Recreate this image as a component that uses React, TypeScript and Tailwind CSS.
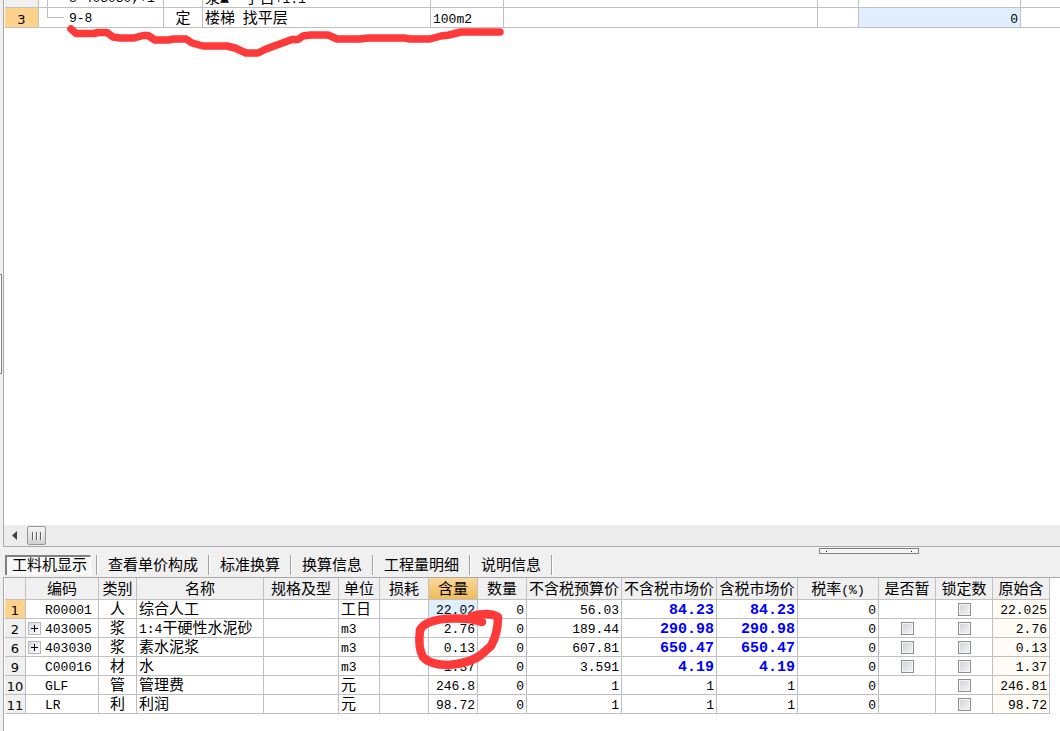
import React from "react";

const pageFont = "font-['Liberation_Mono','Noto_Sans_CJK_SC',monospace]";

function T({ children, bold = false }: { children: string; bold?: boolean }) {
  const parts = children.match(/[\x00-\x7f]+|[^\x00-\x7f]+/g) ?? [];
  return (
    <>
      {parts.map((p, i) => (
        <span
          key={i}
          className={
            /^[\x00-\x7f]/.test(p)
              ? bold
                ? "text-[15px] leading-3 font-bold whitespace-pre text-[#0000ff]"
                : "text-[13px] leading-3 whitespace-pre"
              : "text-[15px] leading-3"
          }
        >
          {p}
        </span>
      ))}
    </>
  );
}

type Row = {
  no: string;
  code: string;
  expand?: boolean;
  kind: string;
  name: string;
  unit: string;
  amount: string;
  prices: [string, string, string];
  temp?: boolean;
  origin: string;
};

const rows: Row[] = [
  { no: "1", code: "R00001", kind: "人", name: "综合人工", unit: "工日", amount: "22.02", prices: ["56.03", "84.23", "84.23"], origin: "22.025" },
  { no: "2", code: "403005", expand: true, kind: "浆", name: "1:4干硬性水泥砂", unit: "m3", amount: "2.76", prices: ["189.44", "290.98", "290.98"], temp: true, origin: "2.76" },
  { no: "6", code: "403030", expand: true, kind: "浆", name: "素水泥浆", unit: "m3", amount: "0.13", prices: ["607.81", "650.47", "650.47"], temp: true, origin: "0.13" },
  { no: "9", code: "C00016", kind: "材", name: "水", unit: "m3", amount: "1.37", prices: ["3.591", "4.19", "4.19"], temp: true, origin: "1.37" },
  { no: "10", code: "GLF", kind: "管", name: "管理费", unit: "元", amount: "246.8", prices: ["1", "1", "1"], origin: "246.81" },
  { no: "11", code: "LR", kind: "利", name: "利润", unit: "元", amount: "98.72", prices: ["1", "1", "1"], origin: "98.72" },
];

const headers = ["", "编码", "类别", "名称", "规格及型", "单位", "损耗", "含量", "数量", "不含税预算价", "不含税市场价", "含税市场价", "税率(%)", "是否暂", "锁定数", "原始含"];
const columns = ["w-[21px]", "w-[73px]", "w-[38px]", "w-[127px]", "w-[75px]", "w-[41px]", "w-[49px]", "w-[49px]", "w-[49px]", "w-[95px]", "w-[95px]", "w-[81px]", "w-[81px]", "w-[57px]", "w-[57px]", "w-[57px]", "w-auto"];
const topColumns = ["w-[34px]", "w-[125px]", "w-[39px]", "w-[228px]", "w-[73px]", "w-[314px]", "w-[41px]", "w-[162px]", "w-auto"];
const tabs = ["工料机显示", "查看单价构成", "标准换算", "换算信息", "工程量明细", "说明信息"];

const table = "w-full table-fixed border-separate border-spacing-0 text-[15px] leading-[15px]";
const line = "border-r border-b border-[#c0c0c0] whitespace-nowrap overflow-hidden";
const cell = `${line} px-0 pt-[3px] pb-0`;
const boxCell = `${line} p-0`;
const rowNo = "font-['DejaVu_Sans',sans-serif] text-[13px] text-center font-normal";

function Check({ label }: { label: string }) {
  return (
    <input
      type="checkbox"
      aria-label={label}
      className="mx-auto block size-[13px] appearance-none border border-[#8e8f8f] bg-linear-to-br from-[#cdd0d8] to-[#f6f6f6] shadow-[inset_0_0_0_1px_#f4f4f4]"
    />
  );
}

function EstimateTable() {
  return (
    <table className={`${table} -mt-3`}>
      <colgroup>
        {topColumns.map((c, i) => (
          <col key={i} className={c} />
        ))}
      </colgroup>
      <tbody>
        <tr className="h-5">
          <td className={`${cell} bg-[#f0f0f0]`} />
          <td className={boxCell}>
            <div className="flex h-[19px] items-start pl-2">
              <span className="mr-[21px] h-full border-l border-[#c0c0c0]" />
              <span className="pt-[3px]">
                <T>8-403030,+1</T>
              </span>
            </div>
          </td>
          <td className={cell} />
          <td className={`${cell} pl-0.5`}>
            <T>浆▲  子目+1.1</T>
          </td>
          <td className={cell} />
          <td className={cell} />
          <td className={cell} />
          <td className={cell} />
          <td className="border-b border-[#c0c0c0] p-0" />
        </tr>
        <tr className="h-5">
          <th scope="row" className={`${cell} ${rowNo} bg-[#ffd28c]`}>3</th>
          <td className={boxCell}>
            <div className="flex h-[19px] items-start pl-2">
              <span className="mr-[5px] h-2.5 w-[17px] border-b border-l border-[#c0c0c0]" />
              <span className="pt-[3px]">
                <T>9-8</T>
              </span>
            </div>
          </td>
          <td className={`${cell} text-center`}>
            <T>定</T>
          </td>
          <td className={`${cell} pl-0.5`}>
            <T>楼梯 找平层</T>
          </td>
          <td className={`${cell} pl-0.5`}>
            <T>100m2</T>
          </td>
          <td className={cell} />
          <td className={cell} />
          <td className={`${cell} bg-[#dfefff] pr-0.5 text-right`}>
            <T>0</T>
          </td>
          <td className="border-b border-[#c0c0c0] p-0" />
        </tr>
      </tbody>
    </table>
  );
}

function ResourceTable() {
  return (
    <table className={table}>
      <colgroup>
        {columns.map((c, i) => (
          <col key={i} className={c} />
        ))}
      </colgroup>
      <thead>
        <tr className="h-[22px]">
          {headers.map((h, i) => (
            <th
              key={i}
              scope="col"
              className={`${cell} text-center font-normal ${h === "含量" ? "bg-linear-to-b from-[#fad79b] to-[#f0bc5a]" : "bg-[#f0f0f0]"}`}
            >
              <T>{h}</T>
            </th>
          ))}
          <td />
        </tr>
      </thead>
      <tbody>
        {rows.map((r, n) => (
          <tr key={r.no} className="h-[19px]">
            <th scope="row" className={`${cell} ${rowNo} ${n === 0 ? "bg-[#ffd28c]" : "bg-[#f0f0f0]"}`}>
              {r.no}
            </th>
            <td className={boxCell}>
              <div className="flex h-[18px] items-center pl-0.5">
                <span className="flex w-[17px]">
                  {r.expand && (
                    <button aria-label={`展开 ${r.code}`} className="size-[13px] border border-[#b8b8b8] bg-linear-to-br from-[#d4d8e0] to-white">
                      <svg viewBox="0 0 11 11" className="size-[11px]" shapeRendering="crispEdges">
                        <path d="M2 5h7v1H2zM5 2h1v7H5z" fill="#000" />
                      </svg>
                    </button>
                  )}
                </span>
                <span className="pt-[3px]">
                  <T>{r.code}</T>
                </span>
              </div>
            </td>
            <td className={`${cell} text-center`}>
              <T>{r.kind}</T>
            </td>
            <td className={`${cell} pl-0.5`}>
              <T>{r.name}</T>
            </td>
            <td className={cell} />
            <td className={`${cell} pl-0.5`}>
              <T>{r.unit}</T>
            </td>
            <td className={cell} />
            <td className={`${cell} pr-0.5 text-right ${n === 0 ? "bg-[#dfefff]" : ""}`}>
              <T>{r.amount}</T>
            </td>
            <td className={`${cell} pr-0.5 text-right`}>
              <T>0</T>
            </td>
            {r.prices.map((p, i) => (
              <td key={i} className={`${cell} pr-0.5 text-right`}>
                <T bold={i > 0 && n < 4}>{p}</T>
              </td>
            ))}
            <td className={`${cell} pr-0.5 text-right`}>
              <T>0</T>
            </td>
            <td className={boxCell}>{r.temp && <Check label={`是否暂 ${r.name}`} />}</td>
            <td className={boxCell}>
              <Check label={`锁定数 ${r.name}`} />
            </td>
            <td className={`${cell} bg-[#fffbf5] pr-0.5 text-right`}>
              <T>{r.origin}</T>
            </td>
            <td />
          </tr>
        ))}
      </tbody>
    </table>
  );
}

export default function App() {
  return (
    <div className={`relative flex min-h-screen flex-col overflow-hidden bg-[#f0f0f0] text-black ${pageFont}`}>
      <section className="ml-[3px] flex flex-1 flex-col overflow-hidden border-b border-l border-[#a9a9a9] bg-white">
        <div className="flex-1 pl-px">
          <EstimateTable />
        </div>
        <div className="flex h-[21px] items-center bg-[#ededed] pl-2">
          <button aria-label="向左滚动" className="mr-2.5">
            <svg viewBox="0 0 5 9" className="block h-[9px] w-[5px]">
              <path d="M5 0v9L0 4.500z" fill="#404040" />
            </svg>
          </button>
          <button aria-label="滚动条" className="flex h-[19px] w-[19px] items-center justify-center gap-0.5 rounded-xs border border-[#979797] bg-linear-to-b from-[#f4f4f4] to-[#d2d2d2]">
            <span className="h-2 w-0.5 border-r border-white bg-[#606060]" />
            <span className="h-2 w-0.5 border-r border-white bg-[#606060]" />
            <span className="h-2 w-0.5 border-r border-white bg-[#606060]" />
          </button>
        </div>
      </section>

      <nav className="flex h-[30px] items-end pb-0.5 pl-[5px] text-[15px] leading-5">
        {tabs.map((t, i) => (
          <React.Fragment key={t}>
            <button
              className={
                i === 0
                  ? "h-5 border-t-2 border-r border-l-2 border-[#808080] border-r-white bg-[#f8f8f8] pr-[3px] pl-[5px]"
                  : "h-5 px-2.5 pt-0.5"
              }
            >
              {t}
            </button>
            <span className={`h-5 w-0.5 border-r border-white bg-[#a0a0a0] ${i === 0 ? "ml-[5px]" : ""}`} />
          </React.Fragment>
        ))}
      </nav>

      <section className="ml-[3px] border-t border-l border-[#a9a9a9] bg-white pb-[17px] pl-px">
        <ResourceTable />
      </section>

      <span className="absolute top-[274px] left-0 h-[100px] w-0.5 border-y border-r border-[#808080] bg-white" />
      <span className="absolute top-[548px] left-[819px] flex h-1.5 w-[100px] items-center justify-between border border-[#808080] bg-[#f4f4f4] px-1.5">
        <span className="size-px bg-[#000080]" />
        <span className="size-px bg-[#000080]" />
      </span>

      <svg viewBox="0 0 1060 731" className="pointer-events-none absolute top-0 left-0 h-[731px] w-[1060px]" fill="none" stroke="#fd3939" strokeLinecap="round" strokeLinejoin="round">
        <path strokeWidth="7.500" d="M71 29L76 33.500H94L98 32.500H107L113 37L120 38H134L143 35.500H148L155 40H168L174 39H186L192 43L203 46H227L235 48L246 53H258L266 49L292 39.500H298L303 36L311 35H328L337 39H360L368 38H404L410 39H430L441 36L449 35L461 32H500" />
        <path strokeWidth="8.500" d="M482 622C474 619 464 618 452 618.500C436 619 424 622 420 630C419 638 419 650 423 657C429 664 440 665 449 665C460 664 474 661 482 654L491 646C496 637 498 627 498 617C491 613 480 614 472 616" />
      </svg>
    </div>
  );
}
